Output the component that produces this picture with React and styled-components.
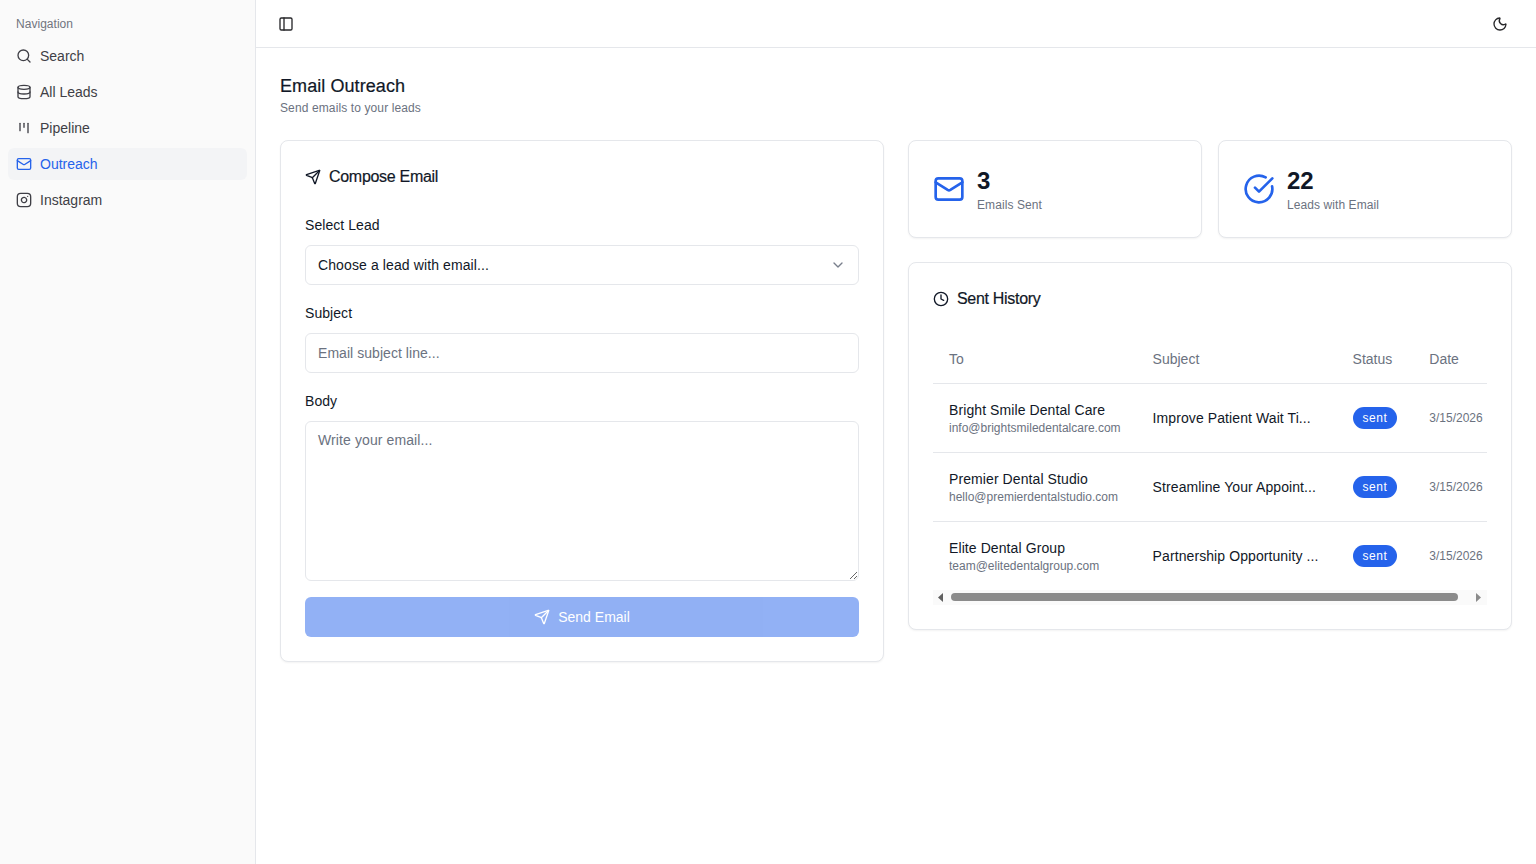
import React from "react";
import styled, { createGlobalStyle } from "styled-components";
import { Search, Database, Mail, Instagram, PanelLeft, Moon, Send, CircleCheckBig, Clock, ChevronDown } from "lucide-react";

const Global = createGlobalStyle`
  * { box-sizing: border-box; }
  html, body { margin: 0; height: 100%; }
  body { font-family: "Liberation Sans", Arial, sans-serif; color: #111827; background: #fff; }
`;
const Shell = styled.div`display: flex; min-height: 864px;`;
const Sidebar = styled.aside`
  width: 256px; flex: none; background: #fafafa; border-right: 1px solid #e5e7eb; padding: 8px;
`;
const NavLabel = styled.div`
  height: 32px; padding: 0 8px; display: flex; align-items: center; font-size: 12px; color: #71757e; letter-spacing: .03px;
`;
const NavList = styled.nav`display: flex; flex-direction: column; gap: 4px;`;
const NavItem = styled.a`
  height: 32px; padding: 0 8px; display: flex; align-items: center; gap: 8px; border-radius: 6px;
  font-size: 14px;
  color: ${p => (p.$active ? "#2563eb" : "#3f3f46")};
  background: ${p => (p.$active ? "#f3f4f6" : "transparent")};
  font-weight: ${p => (p.$active ? 500 : 400)};
  svg { flex: none; }
`;
const Main = styled.div`flex: 1; min-width: 0; display: flex; flex-direction: column;`;
const TopBar = styled.header`
  height: 48px; border-bottom: 1px solid #e5e7eb; display: flex; align-items: center;
  justify-content: space-between; padding: 0 28px 0 22px; color: #27272a;
`;
const Content = styled.main`padding: 24px;`;
const PageTitle = styled.h1`
  margin: 0; font-size: 18px; line-height: 28px; font-weight: 500; color: #111827;
  letter-spacing: .07px; -webkit-text-stroke: .2px #111827;
`;
const PageSub = styled.p`margin: 0; font-size: 12px; line-height: 16px; color: #6b7280; letter-spacing: .116px;`;
const Columns = styled.div`display: grid; grid-template-columns: minmax(0, 1fr) minmax(0, 1fr); gap: 24px; margin-top: 24px; align-items: start;`;
const Card = styled.section`
  background: #fff; border: 1px solid #e5e7eb; border-radius: 8px; box-shadow: 0 1px 2px rgba(0,0,0,.05);
`;
const ComposeCard = styled(Card)`padding: 24px;`;
const CardTitle = styled.h2`
  margin: 0; display: flex; align-items: center; gap: 8px; font-size: 16px; line-height: 24px; font-weight: 500; color: #111827;
  letter-spacing: -.3px; -webkit-text-stroke: .2px #111827;
  svg { -webkit-text-stroke: 0; }
`;
const Form = styled.form`display: flex; flex-direction: column; gap: 16px; margin-top: 24px;`;
const Field = styled.div`display: flex; flex-direction: column; gap: 8px;`;
const Label = styled.label`font-size: 14px; line-height: 24px; color: #111827; letter-spacing: .06px;`;
const SelectBox = styled.div`
  height: 40px; border: 1px solid #e5e7eb; border-radius: 6px; padding: 0 12px; display: flex; align-items: center;
  justify-content: space-between; font-size: 14px; color: #111827; letter-spacing: .11px;
  svg { color: #6b7280; opacity: .9; }
`;
const Input = styled.input`
  height: 40px; border: 1px solid #e5e7eb; border-radius: 6px; padding: 0 12px; font: inherit; font-size: 14px; outline: none;
  letter-spacing: .05px;
  &::placeholder { color: #6b7280; }
`;
const TextArea = styled.textarea`
  height: 160px; border: 1px solid #e5e7eb; border-radius: 6px; padding: 8px 12px; font: inherit; font-size: 14px; line-height: 20px; outline: none;
  display: block; letter-spacing: .1px;
  &::placeholder { color: #6b7280; }
`;
const SendButton = styled.button`
  height: 40px; border: 0; border-radius: 6px; background: #2563eb; opacity: .5; color: #fff; font: inherit; font-size: 14px;
  font-weight: 500; display: flex; align-items: center; justify-content: center; gap: 8px;
`;
const Side = styled.div`display: flex; flex-direction: column; gap: 24px;`;
const Stats = styled.div`display: grid; grid-template-columns: minmax(0, 1fr) minmax(0, 1fr); gap: 16px;`;
const StatCard = styled(Card)`padding: 24px; display: flex; align-items: center; gap: 12px; color: #2563eb;`;
const StatValue = styled.div`font-size: 24px; line-height: 32px; font-weight: 600; color: #111827;`;
const StatLabel = styled.div`font-size: 12px; line-height: 16px; color: #6b7280; letter-spacing: .08px;`;
const HistoryCard = styled(Card)`padding: 24px;`;
const TableWrap = styled.div`margin-top: 24px; overflow: hidden;`;
const Table = styled.table`width: 100%; border-collapse: collapse; font-size: 14px; white-space: nowrap;`;
const Th = styled.th`height: 48px; padding: 0 16px; text-align: left; font-weight: 400; color: #6b7280;`;
const HeadRow = styled.tr`border-bottom: 1px solid #e5e7eb;`;
const Row = styled.tr`border-bottom: 1px solid #e5e7eb; &:last-child { border-bottom: 0; }`;
const Td = styled.td`padding: 16px; color: #111827;`;
const SubjectText = styled.div`width: 168px; letter-spacing: .09px;`;
const DateCell = styled(Td)`font-size: 12px; color: #6b7280;`;
const Name = styled.div`line-height: 20px; letter-spacing: .09px;`;
const Email = styled.div`font-size: 12px; line-height: 16px; color: #6b7280;`;
const Badge = styled.span`
  display: inline-flex; align-items: center; height: 22px; padding: 0 10px; border-radius: 999px;
  background: #2563eb; color: #fff; font-size: 12px; font-weight: 500; letter-spacing: .5px;
`;
const Glyph = styled.svg`flex: none; display: block;`;
const ScrollBar = styled.div`height: 15px; background: #fafafa; display: flex; align-items: center;`;
const ScrollRail = styled.div`flex: 1; padding-left: 3px;`;
const ScrollThumb = styled.div`width: 507px; height: 8px; border-radius: 4px; background: #8b8b8b;`;

const Pipeline = () => (
  <Glyph width="16" height="16" viewBox="0 0 24 24" fill="none" stroke="currentColor" strokeWidth="2" strokeLinecap="round">
    <path d="M6 5v11" /><path d="M12 5v6" /><path d="M18 5v14" />
  </Glyph>
);
const ScrollArrow = ({ points, fill }) => (
  <Glyph width="15" height="15" viewBox="0 0 15 15"><polygon points={points} fill={fill} /></Glyph>
);

const nav = [
  ["Search", Search], ["All Leads", Database], ["Pipeline", Pipeline], ["Outreach", Mail, true], ["Instagram", Instagram],
];
const rows = [
  ["Bright Smile Dental Care", "info@brightsmiledentalcare.com", "Improve Patient Wait Ti..."],
  ["Premier Dental Studio", "hello@premierdentalstudio.com", "Streamline Your Appoint..."],
  ["Elite Dental Group", "team@elitedentalgroup.com", "Partnership Opportunity ..."],
];

export default function App() {
  return (
    <Shell>
      <Global />
      <Sidebar>
        <NavLabel>Navigation</NavLabel>
        <NavList>
          {nav.map(([label, Icon, active]) => (
            <NavItem key={label} $active={active}><Icon size={16} />{label}</NavItem>
          ))}
        </NavList>
      </Sidebar>
      <Main>
        <TopBar><PanelLeft size={16} /><Moon size={16} /></TopBar>
        <Content>
          <PageTitle>Email Outreach</PageTitle>
          <PageSub>Send emails to your leads</PageSub>
          <Columns>
            <ComposeCard>
              <CardTitle><Send size={16} />Compose Email</CardTitle>
              <Form>
                <Field>
                  <Label>Select Lead</Label>
                  <SelectBox>Choose a lead with email...<ChevronDown size={16} /></SelectBox>
                </Field>
                <Field>
                  <Label>Subject</Label>
                  <Input placeholder="Email subject line..." />
                </Field>
                <Field>
                  <Label>Body</Label>
                  <TextArea placeholder="Write your email..." />
                </Field>
                <SendButton type="button"><Send size={16} />Send Email</SendButton>
              </Form>
            </ComposeCard>
            <Side>
              <Stats>
                <StatCard><Mail size={32} /><div><StatValue>3</StatValue><StatLabel>Emails Sent</StatLabel></div></StatCard>
                <StatCard><CircleCheckBig size={32} /><div><StatValue>22</StatValue><StatLabel>Leads with Email</StatLabel></div></StatCard>
              </Stats>
              <HistoryCard>
                <CardTitle><Clock size={16} />Sent History</CardTitle>
                <TableWrap>
                  <Table>
                    <thead>
                      <HeadRow><Th>To</Th><Th>Subject</Th><Th>Status</Th><Th>Date</Th></HeadRow>
                    </thead>
                    <tbody>
                      {rows.map(r => (
                        <Row key={r[0]}>
                          <Td><Name>{r[0]}</Name><Email>{r[1]}</Email></Td>
                          <Td><SubjectText>{r[2]}</SubjectText></Td>
                          <Td><Badge>sent</Badge></Td>
                          <DateCell>3/15/2026</DateCell>
                        </Row>
                      ))}
                    </tbody>
                  </Table>
                </TableWrap>
                <ScrollBar>
                  <ScrollArrow points="5,7.5 10,3 10,12" fill="#5f5f5f" />
                  <ScrollRail><ScrollThumb /></ScrollRail>
                  <ScrollArrow points="9,7.5 4,3 4,12" fill="#8b8b8b" />
                </ScrollBar>
              </HistoryCard>
            </Side>
          </Columns>
        </Content>
      </Main>
    </Shell>
  );
}
